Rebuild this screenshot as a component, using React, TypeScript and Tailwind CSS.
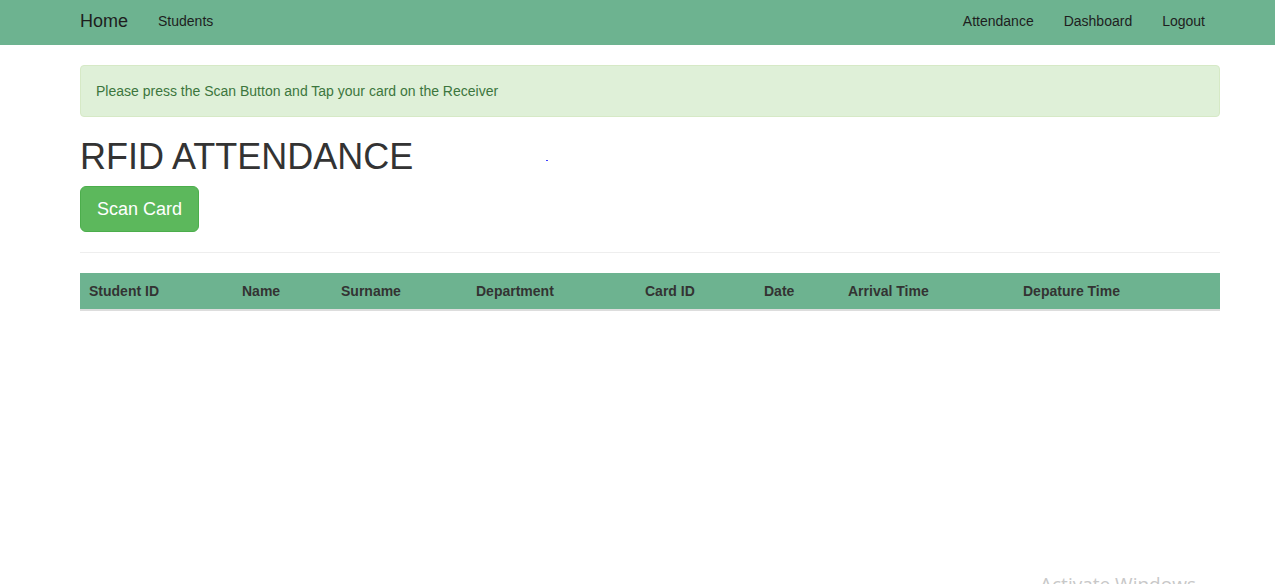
const columns = [
  { label: 'Student ID', w: 'w-[154px] pl-[9px]' },
  { label: 'Name', w: 'w-[99px] pl-[8px]' },
  { label: 'Surname', w: 'w-[135px] pl-[8px]' },
  { label: 'Department', w: 'w-[169px] pl-[8px]' },
  { label: 'Card ID', w: 'w-[119px] pl-[8px]' },
  { label: 'Date', w: 'w-[84px] pl-[8px]' },
  { label: 'Arrival Time', w: 'w-[175px] pl-[8px]' },
  { label: 'Depature Time', w: 'w-[205px] pl-[8px]' },
];

export default function App() {
  return (
    <div className="relative min-h-[584px] overflow-hidden bg-white font-['Liberation_Sans',Arial,sans-serif] text-[14px] text-[#333]">
      <nav className="h-[45px] bg-[#6db390]">
        <div className="ml-[65px] flex h-full w-[1155px] items-center justify-between pb-[2px]">
          <div className="flex items-center">
            <a className="px-[15px] text-[18px] text-[#1e1e1e]">Home</a>
            <a className="px-[15px] text-[#1e1e1e]">Students</a>
          </div>
          <div className="flex items-center">
            <a className="px-[15px] text-[#1e1e1e]">Attendance</a>
            <a className="px-[15px] text-[#1e1e1e]">Dashboard</a>
            <a className="px-[15px] text-[#1e1e1e]">Logout</a>
          </div>
        </div>
      </nav>

      <main className="ml-[80px] w-[1140px] pt-[20px]">
        <div className="mb-[20px] rounded-[4px] border border-[#d6e9c6] bg-[#dff0d8] px-[15px] py-[15px] leading-[20px] text-[#3c763d]">
          Please press the Scan Button and Tap your card on the Receiver
        </div>

        <div className="flex items-center">
          <h1 className="mb-[9px] text-[36px] leading-[40px] font-normal text-[#333]">RFID ATTENDANCE</h1>
          <span className="ml-[133px] mb-[3px] h-[1px] w-[2px] bg-[#4040ff]" />
        </div>

        <button className="h-[46px] rounded-[6px] border border-[#4cae4c] bg-[#5cb85c] px-[16px] text-[18px] leading-[24px] text-white">
          Scan Card
        </button>

        <hr className="mt-[20px] mb-[20px] border-t border-[#eee]" />

        <div className="flex h-[38px] items-center border-b-2 border-[#ddd] bg-[#6db390] pt-[1px]">
          {columns.map((c) => (
            <div key={c.label} className={`${c.w} font-bold text-[#333]`}>
              {c.label}
            </div>
          ))}
        </div>
      </main>

      <div className="absolute left-[1040px] top-[570px] text-[19px] text-[#c8c8c8] font-['Open_Sans',sans-serif]">
        Activate Windows
      </div>
    </div>
  );
}
